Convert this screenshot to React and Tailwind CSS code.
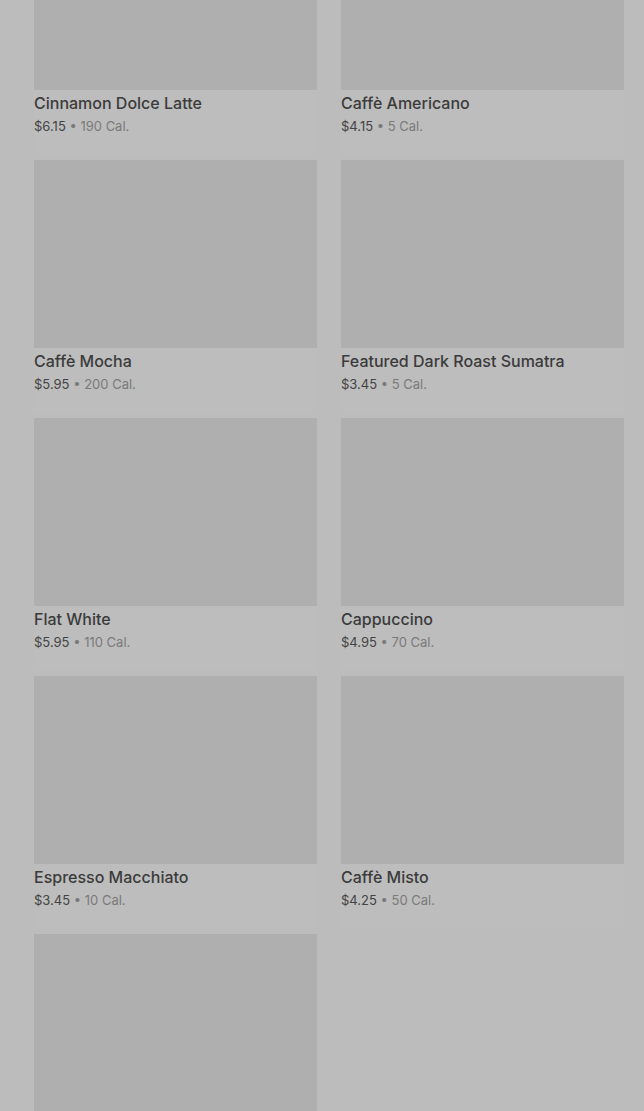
const drinks = [
  { name: "Cinnamon Dolce Latte", price: "6.15", cal: 190 },
  { name: "Caffè Americano", price: "4.15", cal: 5 },
  { name: "Caffè Mocha", price: "5.95", cal: 200 },
  { name: "Featured Dark Roast Sumatra", price: "3.45", cal: 5 },
  { name: "Flat White", price: "5.95", cal: 110 },
  { name: "Cappuccino", price: "4.95", cal: 70 },
  { name: "Espresso Macchiato", price: "3.45", cal: 10 },
  { name: "Caffè Misto", price: "4.25", cal: 50 },
  { name: "Caramel Macchiato", price: "5.75", cal: 250 },
];

function DrinkCard({ drink }) {
  return (
    <div className="bg-[#bdbdbd]">
      <div className="h-[188px] bg-[#afafaf]" />
      <div className="h-[64px] pt-[2px]">
        <h3 className="h-[22px] text-[16px] leading-[22px] font-medium text-[#3b3b3b]">
          {drink.name}
        </h3>
        <p className="mt-[2px] h-[20px] text-[13px] leading-[20px] text-[#444]">
          ${drink.price}
          <span className="text-[#7a7a7a]"> • {drink.cal} Cal.</span>
        </p>
      </div>
    </div>
  );
}

export default function App() {
  return (
    <div
      className="h-[1111px] overflow-hidden bg-[#bcbcbc] pl-[34px] pr-[20px]"
      style={{ fontFamily: "Inter, 'Noto Sans', sans-serif" }}
    >
      <div className="-mt-[98px] grid grid-cols-2 gap-x-[24px] gap-y-[6px]">
        {drinks.map((d) => (
          <DrinkCard key={d.name} drink={d} />
        ))}
      </div>
    </div>
  );
}
